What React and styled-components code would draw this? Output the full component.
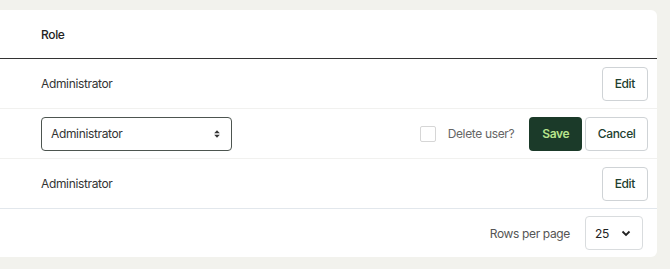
import styled, { createGlobalStyle } from "styled-components"

const Global = createGlobalStyle`
  html, body {
    margin: 0;
    padding: 0;
    background: #f2f2ed;
    font-family: Inter, "Noto Sans", sans-serif;
    letter-spacing: -0.35px;
  }
`

const rows = [
  { id: 1, role: "Administrator", editing: false },
  { id: 2, role: "Administrator", editing: true },
  { id: 3, role: "Administrator", editing: false },
]

const App = () => {
  return (
    <>
      <Global />
      <Page>
        <Card>
          <HeaderRow>
            <HeaderCell>Role</HeaderCell>
          </HeaderRow>
          {rows.map((r) =>
            r.editing ? (
              <Row key={r.id} $last={false}>
                <SelectBox>
                  <span>{r.role}</span>
                  <svg width="8" height="10" viewBox="0 0 8 10">
                    <path d="M4 1.2 L6.8 4.2 H1.2 Z M4 8.8 L1.2 5.8 H6.8 Z" fill="#333" />
                  </svg>
                </SelectBox>
                <Actions>
                  <DeleteLabel>
                    <Checkbox />
                    <span>Delete user?</span>
                  </DeleteLabel>
                  <SaveButton>Save</SaveButton>
                  <Button>Cancel</Button>
                </Actions>
              </Row>
            ) : (
              <Row key={r.id} $last={r.id === 3}>
                <Cell>{r.role}</Cell>
                <Actions>
                  <Button $edit>Edit</Button>
                </Actions>
              </Row>
            )
          )}
          <Footer>
            <FooterLabel>Rows per page</FooterLabel>
            <PageSize>
              <span>25</span>
              <svg width="10" height="7" viewBox="0 0 10 7">
                <path d="M1.5 1.5 L5 5 L8.5 1.5" stroke="#222" strokeWidth="1.8" fill="none" />
              </svg>
            </PageSize>
          </Footer>
        </Card>
      </Page>
    </>
  )
}

const Page = styled.div`
  padding-top: 10px;
  height: 269px;
  box-sizing: border-box;
`

const Card = styled.div`
  width: 657px;
  background: #fff;
  border-radius: 0 6px 6px 0;
`

const HeaderRow = styled.div`
  height: 48px;
  display: flex;
  align-items: center;
  padding-left: 41px;
  border-bottom: 1px solid #333;
`

const HeaderCell = styled.div`
  font-size: 12px;
  font-weight: 500;
  color: #222;
`

const Row = styled.div`
  height: 49px;
  display: flex;
  align-items: center;
  justify-content: space-between;
  padding-left: 41px;
  padding-right: 9px;
  border-bottom: 1px solid ${(p) => (p.$last ? "#e2e7ec" : "#f1f1ef")};
`

const Cell = styled.div`
  font-size: 12px;
  color: #333;
`

const SelectBox = styled.div`
  width: 191px;
  height: 34px;
  box-sizing: border-box;
  border: 1px solid #4d5550;
  border-radius: 4px;
  display: flex;
  align-items: center;
  justify-content: space-between;
  padding: 0 10px 0 9px;
  font-size: 12px;
  color: #333;
`

const Actions = styled.div`
  display: flex;
  align-items: center;
  gap: 3px;
`

const DeleteLabel = styled.label`
  display: flex;
  align-items: center;
  gap: 12px;
  font-size: 12px;
  color: #666;
  margin-right: 12px;
`

const Checkbox = styled.span`
  width: 16px;
  height: 16px;
  border: 1px solid #d6d6d6;
  border-radius: 2px;
  box-sizing: border-box;
`

const Button = styled.button`
  height: 34px;
  box-sizing: border-box;
  padding: 0 ${(p) => (p.$edit ? "12px" : "11.5px")};
  background: #fff;
  border: 1px solid #cfd3d6;
  border-radius: 4px;
  font-family: inherit;
  letter-spacing: inherit;
  font-size: 12px;
  font-weight: 500;
  color: #1d4030;
`

const SaveButton = styled.button`
  height: 34px;
  padding: 0 13px;
  background: #1b3a29;
  border: none;
  border-radius: 4px;
  font-family: inherit;
  letter-spacing: inherit;
  font-size: 12px;
  font-weight: 600;
  color: #b7e38c;
`

const Footer = styled.div`
  height: 48px;
  display: flex;
  align-items: center;
  justify-content: flex-end;
  padding-right: 14px;
  gap: 15px;
`

const FooterLabel = styled.span`
  font-size: 12px;
  color: #555;
`

const PageSize = styled.div`
  width: 58px;
  height: 34px;
  box-sizing: border-box;
  border: 1px solid #d9dcde;
  border-radius: 4px;
  display: flex;
  align-items: center;
  justify-content: space-between;
  padding: 0 11px 0 9px;
  font-size: 12px;
  color: #222;
`

export default App
